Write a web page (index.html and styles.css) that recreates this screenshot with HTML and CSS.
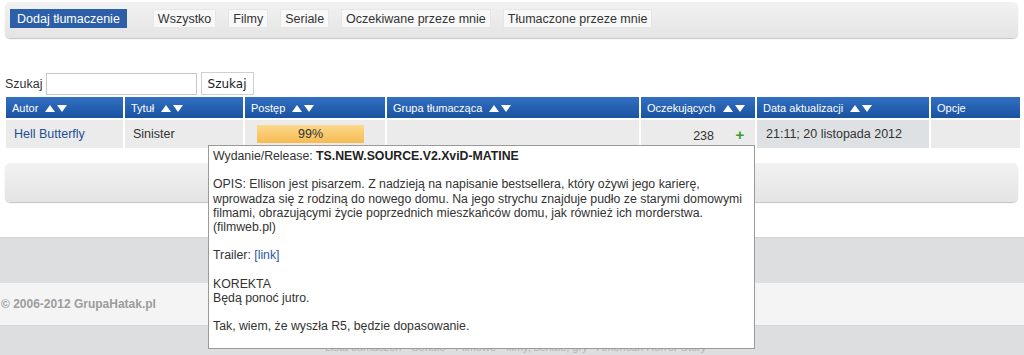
FILE: index.html
```html
<!DOCTYPE html>
<html lang="pl">
<head>
    <meta charset="UTF-8">
    <title>Tłumaczenia</title>
    <link rel="stylesheet" href="styles.css">
</head>
<body>
    <div class="toolbar">
        <a class="btn btn-add" href="#">Dodaj tłumaczenie</a>
        <a class="btn" href="#">Wszystko</a>
        <a class="btn" href="#">Filmy</a>
        <a class="btn" href="#">Seriale</a>
        <a class="btn" href="#">Oczekiwane przeze mnie</a>
        <a class="btn" href="#">Tłumaczone przeze mnie</a>
    </div>

    <form class="search">
        <label for="q">Szukaj</label>
        <input type="text" id="q" name="q">
        <input type="submit" value="Szukaj">
    </form>

    <table class="list">
        <thead>
            <tr>
                <th class="c-autor">Autor <svg class="sort" width="22" height="7" viewBox="0 0 22 7"><polygon points="0,7 5,0 10,7"/><polygon points="12,0 22,0 17,7"/></svg></th>
                <th class="c-tytul">Tytuł <svg class="sort" width="22" height="7" viewBox="0 0 22 7"><polygon points="0,7 5,0 10,7"/><polygon points="12,0 22,0 17,7"/></svg></th>
                <th class="c-postep">Postęp <svg class="sort" width="22" height="7" viewBox="0 0 22 7"><polygon points="0,7 5,0 10,7"/><polygon points="12,0 22,0 17,7"/></svg></th>
                <th class="c-grupa">Grupa tłumacząca <svg class="sort" width="22" height="7" viewBox="0 0 22 7"><polygon points="0,7 5,0 10,7"/><polygon points="12,0 22,0 17,7"/></svg></th>
                <th class="c-oczek">Oczekujących <svg class="sort" width="22" height="7" viewBox="0 0 22 7"><polygon points="0,7 5,0 10,7"/><polygon points="12,0 22,0 17,7"/></svg></th>
                <th class="c-data">Data aktualizacji <svg class="sort" width="22" height="7" viewBox="0 0 22 7"><polygon points="0,7 5,0 10,7"/><polygon points="12,0 22,0 17,7"/></svg></th>
                <th class="c-opcje">Opcje</th>
            </tr>
        </thead>
        <tbody>
            <tr>
                <td><a href="#">Hell Butterfly</a></td>
                <td>Sinister</td>
                <td><div class="progress">99%</div></td>
                <td></td>
                <td class="waiting"><span class="count">238</span><a class="plus" href="#">+</a></td>
                <td class="date">21:11; 20 listopada 2012</td>
                <td></td>
            </tr>
        </tbody>
    </table>

    <div class="panel"></div>

    <div class="footer">
        <div class="band"></div>
        <div class="copy">© 2006-2012 GrupaHatak.pl</div>
        <div class="band links">Lista tłumaczeń · Seriale · Filmowe · filmy, seriale, gry · American Horror Story</div>
    </div>

    <div class="tooltip">
        Wydanie/Release: <b>TS.NEW.SOURCE.V2.XviD-MATINE</b><br>
        <br>
        OPIS: Ellison jest pisarzem. Z nadzieją na napisanie bestsellera, który ożywi jego karierę, wprowadza się z rodziną do nowego domu. Na jego strychu znajduje pudło ze starymi domowymi filmami, obrazującymi życie poprzednich mieszkańców domu, jak również ich morderstwa.<br>
        (filmweb.pl)<br>
        <br>
        Trailer: <a href="#">[link]</a><br>
        <br>
        KOREKTA<br>
        Będą ponoć jutro.<br>
        <br>
        Tak, wiem, że wyszła R5, będzie dopasowanie.
    </div>
</body>
</html>
```

FILE: styles.css
```css
body {
    font-family: "Liberation Sans", Arial, sans-serif;
    font-size: 12.5px;
    color: #333;
    margin: 0;
    padding: 0;
    background: #fff;
}
a {
    color: #1e4f96;
    text-decoration: none;
}
.toolbar {
    display: flex;
    align-items: flex-start;
    gap: 12px;
    height: 36px;
    margin: 2px 6px 0 5px;
    padding: 7px 5px 0;
    box-sizing: border-box;
    border-radius: 5px;
    background: linear-gradient(#f2f2f2, #e4e4e4);
    box-shadow: 0 1px 1px #c4c4c4;
}
.btn {
    display: block;
    height: 19px;
    line-height: 19px;
    padding: 0 4px;
    color: #333;
    background: #f8f8f8;
    border: 1px solid #e6e6e6;
    box-sizing: border-box;
}
.btn-add {
    color: #fff;
    background: #2c5fa7;
    border-color: #2c5fa7;
    padding: 0 6px;
    margin-right: 14px;
}
.search {
    display: flex;
    align-items: center;
    margin: 34px 0 0 5px;
    height: 23px;
}
.search input[type="text"] {
    width: 151px;
    height: 22px;
    margin: 0 0 0 3px;
    padding: 0 3px;
    border: 1px solid #c8c8c8;
    box-sizing: border-box;
}
.search input[type="submit"] {
    height: 23px;
    width: 53px;
    margin-left: 4px;
    padding: 0;
    font-family: "DejaVu Sans", Verdana, sans-serif;
    font-size: 12px;
    color: #222;
    background: #fff;
    border: 1px solid #cfcfcf;
}
.list {
    border-collapse: separate;
    border-spacing: 2px;
    margin-left: 4px;
    width: 1018px;
    table-layout: fixed;
}
.list th {
    height: 21px;
    padding: 0 0 0 6px;
    text-align: left;
    font-weight: normal;
    font-size: 11px;
    color: #fff;
    background: linear-gradient(#3270c2, #1a52a0);
    white-space: nowrap;
}
.sort {
    fill: #fff;
    margin-left: 4px;
    vertical-align: 0;
}
.c-autor { width: 111px; }
.c-tytul { width: 112px; }
.c-postep { width: 134px; }
.c-grupa { width: 246px; }
.c-oczek { width: 108px; }
.c-data { width: 166px; }
.list td {
    height: 28px;
    padding: 0 0 0 8px;
    background: #ebebeb;
    white-space: nowrap;
}
.list td.date {
    background: #dee1e4;
    padding-left: 9px;
}
.progress {
    width: 107px;
    height: 18px;
    line-height: 18px;
    margin-left: 4px;
    text-align: center;
    background: linear-gradient(#fcd98c, #f6bb52);
}
.list td.waiting {
    padding: 0;
}
.waiting {
    text-align: right;
}
.count {
    margin-right: 11px;
}
.plus {
    display: inline-block;
    width: 30px;
    text-align: center;
    font-weight: bold;
    font-size: 15px;
    color: #3a9a2a;
}
.panel {
    height: 39px;
    margin: 13px 6px 0 5px;
    border-radius: 5px;
    background: linear-gradient(#f2f2f2, #e4e4e4);
    box-shadow: 0 1px 1px #c4c4c4;
}
.footer {
    margin-top: 35px;
}
.band {
    height: 45px;
    background: #dcdedf;
    border-top: 1px solid #d2d4d5;
}
.copy {
    height: 42px;
    line-height: 42px;
    padding-left: 1px;
    background: #f4f4f4;
    color: #9c9c9c;
    font-weight: bold;
    font-size: 12px;
}
.band.links {
    height: 40px;
    box-sizing: border-box;
    padding: 15px 0 0 325px;
    color: #b3b3b3;
    font-size: 11px;
}
.tooltip {
    position: absolute;
    left: 208px;
    top: 145px;
    width: 547px;
    height: 204px;
    box-sizing: border-box;
    padding: 3px 3px 14px 4px;
    font-size: 12.3px;
    line-height: 14.2px;
    background: #fff;
    border: 1px solid #9a9a9a;
    color: #333;
}
.tooltip b {
    color: #222;
}
.tooltip a {
    color: #2f56a6;
}
```
